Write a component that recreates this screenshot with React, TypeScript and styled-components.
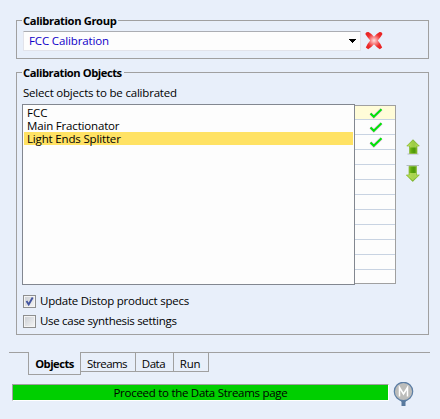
import React from "react";
import styled, { createGlobalStyle, css } from "styled-components";

const LINE = "#a0a0a0";

const Global = createGlobalStyle`
  * { box-sizing: border-box; }
  html, body { margin: 0; background: #e8effa; }
  body { font-family: "Open Sans", "Noto Sans", sans-serif; font-size: 11.5px; color: #000; overflow: hidden; }
`;

const Window = styled.main`
  width: 440px;
  height: 419px;
  padding: 20px 10px 0 9px;
  display: flex;
  flex-direction: column;
  background: #e8effa;
`;

const Label = styled.span<{ $track?: number; $bold?: boolean }>`
  white-space: nowrap;
  line-height: 16px;
  letter-spacing: ${(p) => p.$track ?? 0}px;
  ${(p) => p.$bold && css`font-weight: 700; font-size: 11.2px;`}
`;

const Group = styled.section<{ $height: number }>`
  width: 413px;
  height: ${(p) => p.$height}px;
  margin: 0 0 13px 7px;
  border: 1px solid ${LINE};
  display: flex;
  flex-direction: column;
`;

const Legend = styled.header`
  height: 16px;
  margin: -8px 0 0 5px;
  padding: 0 2px 0 1px;
  align-self: flex-start;
  display: flex;
  flex-shrink: 0;
  background: #e8effa;
`;

const GroupRow = styled.div`
  display: flex;
  margin: 2px 0 0 6px;
  gap: 4px;
`;

const Combo = styled.div`
  width: 338px;
  height: 20px;
  padding: 0 4px 0 5px;
  border: 1px solid #e2e3ea;
  border-top-color: #abadb3;
  border-radius: 1px;
  background: #fdfdfd;
  color: #1000c8;
  display: flex;
  justify-content: space-between;
  align-items: center;
`;

const Prompt = styled.div`
  height: 16px;
  margin: 4px 0 0 6px;
  display: flex;
`;

const Picker = styled.div`
  display: flex;
  margin: 3px 0 0 5px;
`;

const List = styled.div`
  width: 333px;
  height: 181px;
  padding: 1px;
  border: 1px solid #828790;
  background: #fdfdfd;
`;

const Item = styled.div<{ $selected?: boolean }>`
  height: 13px;
  padding-left: 3px;
  display: flex;
  align-items: center;
  background: ${(p) => (p.$selected ? "#ffe264" : "transparent")};
  ${Label} { line-height: 13px; }
`;

const Marks = styled.div`
  width: 41px;
  height: 179px;
  margin-top: 1px;
  border: 1px solid ${LINE};
  border-left: 0;
  background: #fdfdfd;
`;

const Mark = styled.div<{ $active?: boolean }>`
  height: 15px;
  padding: 1px 0 0 2px;
  border-bottom: 1px solid #c8d3e2;
  display: flex;
  justify-content: center;
  align-items: center;
  background: ${(p) => (p.$active ? "#fffcd8" : "transparent")};
  &:first-child { height: 14px; }
  &:last-child { border-bottom: 0; height: 13px; }
`;

const Arrows = styled.div`
  margin: 35px 0 0 10px;
  display: flex;
  flex-direction: column;
  gap: 10px;
  svg { display: block; }
`;

const Option = styled.label`
  height: 20px;
  margin-left: 6px;
  display: flex;
  align-items: center;
  gap: 4px;
`;

const Options = styled.div`
  margin-top: 6px;
`;

const Box = styled.span`
  width: 13px;
  height: 13px;
  border: 1px solid #8e8f8f;
  background: linear-gradient(135deg, #c9cdd2, #f6f6f6);
  box-shadow: inset 0 0 0 1px #f4f4f4;
  svg { display: block; }
`;

const Tabs = styled.nav`
  height: 23px;
  margin-top: 4px;
  display: flex;
  align-items: flex-start;
`;

const Rule = styled.span<{ $width?: number }>`
  height: 1px;
  background: ${LINE};
  ${(p) => (p.$width ? css`width: ${p.$width}px;` : css`flex: 1;`)}
`;

const Tab = styled.span<{ $width: number; $active?: boolean }>`
  width: ${(p) => p.$width}px;
  height: ${(p) => (p.$active ? 23 : 20)}px;
  display: flex;
  justify-content: center;
  padding: ${(p) => (p.$active ? "4px 0 0" : "3px 2px 0 0")};
  border: 1px solid ${LINE};
  border-left-width: ${(p) => (p.$active ? 1 : 0)}px;
  border-top-width: ${(p) => (p.$active ? 0 : 1)}px;
`;

const Footer = styled.footer`
  display: flex;
  margin: 7px 0 0 3px;
  gap: 4px;
`;

const Proceed = styled.div`
  width: 377px;
  height: 17px;
  margin-top: 2px;
  display: flex;
  justify-content: center;
  align-items: center;
  background: #00cf00;
  border: 1px solid #fff;
  border-top-color: ${LINE};
  border-left-color: ${LINE};
`;

const Caret = () => (
  <svg width="7" height="4" shapeRendering="crispEdges"><path d="M0 0h7v1h-1v1h-1v1h-1v1h-1v-1h-1v-1h-1v-1h-1z" fill="#000" /></svg>
);

const Delete = () => (
  <svg width="18" height="19" viewBox="0 0 18 19">
    <defs>
      <radialGradient id="x" gradientUnits="userSpaceOnUse" cx="9" cy="9.5" r="9">
        <stop offset="0" stopColor="#ffdcdc" /><stop offset=".4" stopColor="#f88080" /><stop offset=".75" stopColor="#ee3030" /><stop offset="1" stopColor="#e92525" />
      </radialGradient>
    </defs>
    <path d="M.3 3Q.8 .6 3.500 1Q7 3 9 5.800Q11 3 14.600 1Q17 .6 17.500 3Q15.500 6.500 12.800 9.500Q15.500 12.500 17.200 16.500L14.800 18.300Q11.500 16 9 13.200Q6.500 16 3.200 18.300L.8 16.500Q2.500 12.500 5.200 9.500Q2.500 6.500 .3 3Z" fill="url(#x)" />
  </svg>
);

const Tick = () => (
  <svg width="14" height="11" viewBox="0 0 14 11">
    <path d="M1.500 5.500L4.800 8.800L12.500 1.200" fill="none" stroke="#f6c8f0" strokeWidth="3.400" />
    <path d="M1.500 5.500L4.800 8.800L12.500 1.200" fill="none" stroke="#00e408" strokeWidth="2.100" />
  </svg>
);

const UpArrow = () => (
  <svg width="14" height="16" viewBox="0 0 14 16">
    <defs>
      <linearGradient id="u"><stop offset="0" stopColor="#b9dc45" /><stop offset=".4" stopColor="#5da80c" /><stop offset=".6" stopColor="#4d970a" /><stop offset="1" stopColor="#a8d638" /></linearGradient>
    </defs>
    <path d="M1.500 15H12.500" stroke="#b4bac5" />
    <path d="M7 .7L13.300 7H11V14.500H3.500V7H.8Z" fill="url(#u)" stroke="#86b832" strokeWidth=".7" />
    <path d="M7 1.300L12 6.500V7H10.500V8.500H4V7H2V6.500Z" fill="#c6e667" opacity=".65" />
  </svg>
);

const DownArrow = () => (
  <svg width="14" height="17" viewBox="0 0 14 17">
    <path d="M.5 .5H13" stroke="#b4bac5" />
    <path d="M3 1.200H10.500V10H13.300L6.700 16.500L.3 10H3Z" fill="url(#u)" stroke="#86b832" strokeWidth=".7" />
    <path d="M3.500 8H10V10.300H12.200L6.700 15.700L1.300 10.300H3.500Z" fill="#c6e667" opacity=".75" />
  </svg>
);

const BoxTick = () => (
  <svg width="11" height="11" viewBox="0 0 11 11"><path d="M2.500 5L4.700 8.500L8.700 1.500" fill="none" stroke="#4355a0" strokeWidth="1.900" /></svg>
);

const Badge = () => (
  <svg width="21" height="25" viewBox="0 0 21 25">
    <path d="M7 18H14L12.500 20V24H8.500V20Z" fill="#58799d" />
    <circle cx="10.500" cy="9.500" r="9.200" fill="#bcbdbb" stroke="#5c7ea5" strokeWidth="1.200" />
    <path d="M6.500 14.500V5.500L10.500 12L14.500 5.500V14.500" fill="none" stroke="#fff" strokeWidth="1.500" />
  </svg>
);

const items = [
  { name: "FCC", track: 0 },
  { name: "Main Fractionator", track: -0.17 },
  { name: "Light Ends Splitter", track: -0.16 },
];

export default function App() {
  return (
    <>
      <Global />
      <Window>
        <Group $height={39}>
          <Legend><Label $bold $track={-0.37}>Calibration Group</Label></Legend>
          <GroupRow>
            <Combo><Label $track={-0.14}>FCC Calibration</Label><Caret /></Combo>
            <Delete />
          </GroupRow>
        </Group>
        <Group $height={263}>
          <Legend><Label $bold $track={-0.45}>Calibration Objects</Label></Legend>
          <Prompt><Label $track={-0.2}>Select objects to be calibrated</Label></Prompt>
          <Picker>
            <List>
              {items.map((it, i) => (
                <Item key={it.name} $selected={i === 2}><Label $track={it.track}>{it.name}</Label></Item>
              ))}
            </List>
            <Marks>
              {Array.from({ length: 12 }, (_, i) => (
                <Mark key={i} $active={i === 0}>{i < 3 && <Tick />}</Mark>
              ))}
            </Marks>
            <Arrows><UpArrow /><DownArrow /></Arrows>
          </Picker>
          <Options>
            <Option><Box><BoxTick /></Box><Label $track={-0.24}>Update Distop product specs</Label></Option>
            <Option><Box /><Label $track={-0.3}>Use case synthesis settings</Label></Option>
          </Options>
        </Group>
        <Tabs>
          <Rule $width={19} />
          <Tab $width={53} $active><Label $bold $track={-0.5}>Objects</Label></Tab>
          <Tab $width={55}><Label $track={-0.6}>Streams</Label></Tab>
          <Tab $width={38}><Label $track={-0.4}>Data</Label></Tab>
          <Tab $width={35}><Label $track={-0.3}>Run</Label></Tab>
          <Rule />
        </Tabs>
        <Footer>
          <Proceed><Label $track={-0.28}>Proceed to the Data Streams page</Label></Proceed>
          <Badge />
        </Footer>
      </Window>
    </>
  );
}
